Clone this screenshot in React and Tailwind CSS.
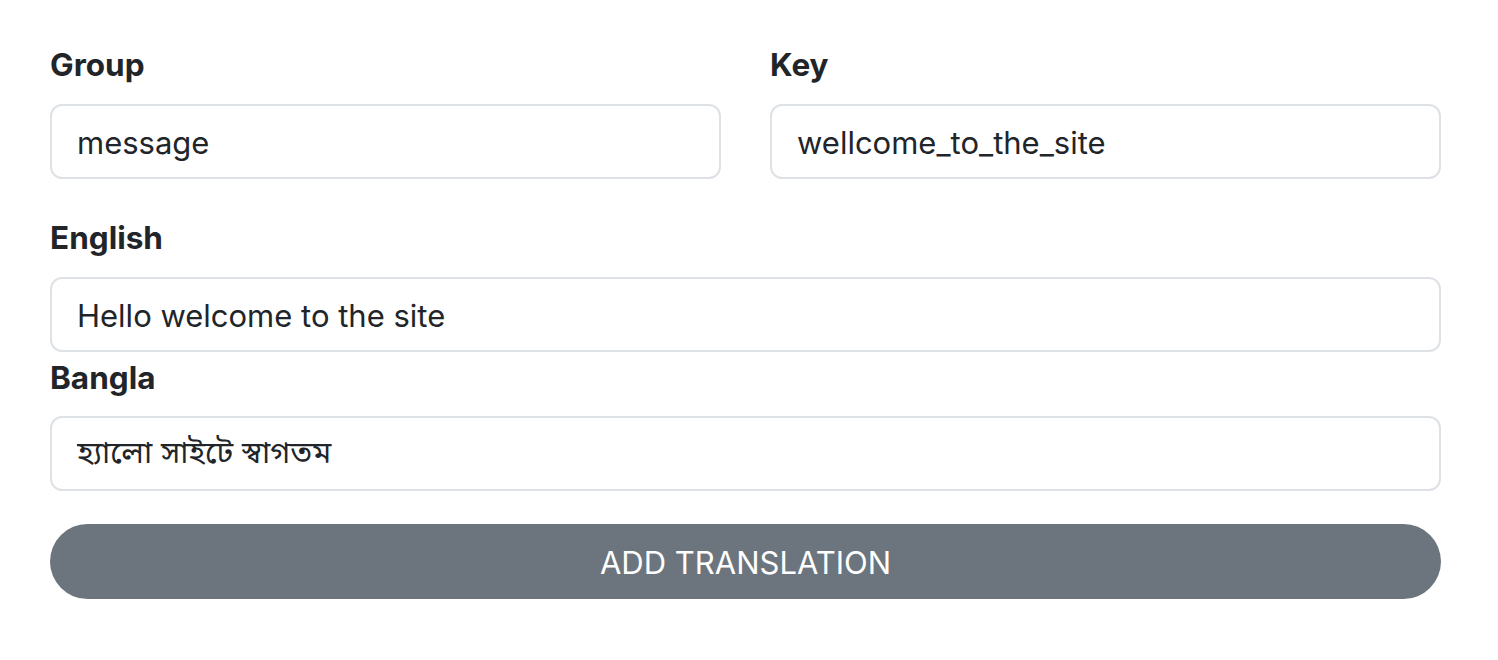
export default function App() {
  const font = { fontFamily: 'Inter, "Noto Sans Bengali", "Noto Sans", sans-serif' };
  const inputCls =
    "block w-full h-[75px] rounded-[12px] border-2 border-[#dee2e6] bg-white px-[25px] pt-[2px] text-[31px] leading-[45px] text-[#212529] outline-none";
  const labelCls = "block text-[31.5px] leading-[45px] font-bold text-[#212529] mb-[17px]";
  return (
    <div className="w-[1498px] h-[660px] bg-white pt-[42px] pl-[50px]" style={font}>
      <div className="w-[1391px]">
        <div className="grid grid-cols-2 gap-x-[49px]">
          <div>
            <label className={labelCls}>Group</label>
            <input className={inputCls} defaultValue="message" style={font} />
          </div>
          <div>
            <label className={labelCls}>Key</label>
            <input className={inputCls} defaultValue="wellcome_to_the_site" style={font} />
          </div>
        </div>
        <div className="mt-[36px]">
          <label className={labelCls}>English</label>
          <input className={inputCls} defaultValue="Hello welcome to the site" style={font} />
        </div>
        <div className="mt-[3px]">
          <label className={labelCls + " !mb-[16px]"}>Bangla</label>
          <input className={inputCls} defaultValue="হ্যালো সাইটে স্বাগতম" style={font} />
        </div>
        <button
          className="mt-[33px] block w-full h-[75px] rounded-full bg-[#6c757d] pt-[2px] text-white text-[31px] leading-[45px]"
          style={font}
        >
          ADD TRANSLATION
        </button>
      </div>
    </div>
  );
}
